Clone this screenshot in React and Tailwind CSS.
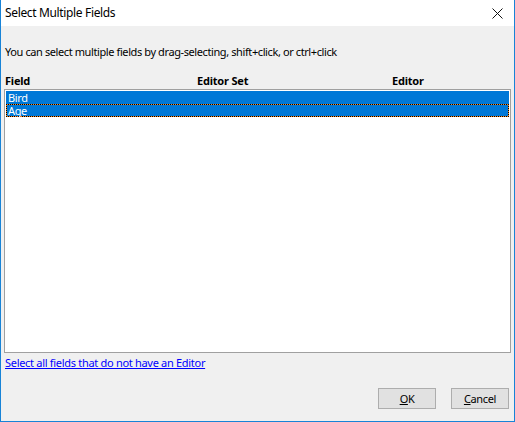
import React from 'react';

const fields = [
  { name: 'Bird', editorSet: '', editor: '' },
  { name: 'Age', editorSet: '', editor: '', focused: true },
];

const CloseIcon = () => (
  <svg width="11" height="11" viewBox="0 0 11 11" className="block">
    <path d="M0.5 0.5 L10.5 10.5 M10.5 0.5 L0.5 10.5" stroke="#111" strokeWidth="1" fill="none" />
  </svg>
);

const App = () => {
  return (
    <div
      className="w-[515px] h-[422px] flex flex-col bg-[#f0f0f0] border-l border-r border-b border-[#1883d7] text-[11px] tracking-[-0.35px] text-black overflow-hidden"
      style={{ fontFamily: '"Noto Sans", "Open Sans", sans-serif' }}
    >
      {/* Title bar */}
      <div className="h-[26px] shrink-0 bg-white flex items-center justify-between pl-[4px] pr-[11px]">
        <span className="text-[12px] leading-none tracking-[-0.35px]">Select Multiple Fields</span>
        <CloseIcon />
      </div>

      {/* Body */}
      <div className="flex flex-col px-[3px]">
        <p className="mt-[19px] pl-[1px] leading-[14px] h-[14px] tracking-[-0.4px]">
          You can select multiple fields by drag-selecting, shift+click, or ctrl+click
        </p>

        <div className="mt-[15px] grid grid-cols-[192px_195px_1fr] pl-[1px] font-bold leading-[14px] h-[15px] tracking-[-0.2px]">
          <span>Field</span>
          <span>Editor Set</span>
          <span>Editor</span>
        </div>

        <div className="h-[264px] bg-white border border-[#a0a0a0] pt-[1px] px-[1px]">
          {fields.map((f) =>
            f.focused ? (
              <div key={f.name} className="h-[13px] bg-[#ff8a1f] border border-dotted border-black">
                <div className="h-full bg-[#0078d7] text-white leading-[11px] pl-[1px]">{f.name}</div>
              </div>
            ) : (
              <div key={f.name} className="h-[13px] bg-[#0078d7] text-white leading-[13px] pl-[2px]">
                {f.name}
              </div>
            )
          )}
        </div>

        <div className="mt-[3px] pl-[1px] h-[14px] leading-[14px]">
          <a href="#" className="text-[#0000ff] underline tracking-[-0.3px]">
            Select all fields that do not have an Editor
          </a>
        </div>

        <div className="mt-[18px] flex justify-end gap-[15px] pr-[2px]">
          <button className="w-[58px] h-[21px] bg-[#e1e1e1] border border-[#adadad] text-[11px] leading-none">
            <span className="underline">O</span>K
          </button>
          <button className="w-[58px] h-[21px] bg-[#e1e1e1] border border-[#adadad] text-[11px] leading-none">
            <span className="underline">C</span>ancel
          </button>
        </div>
      </div>
    </div>
  );
};

export default App;
